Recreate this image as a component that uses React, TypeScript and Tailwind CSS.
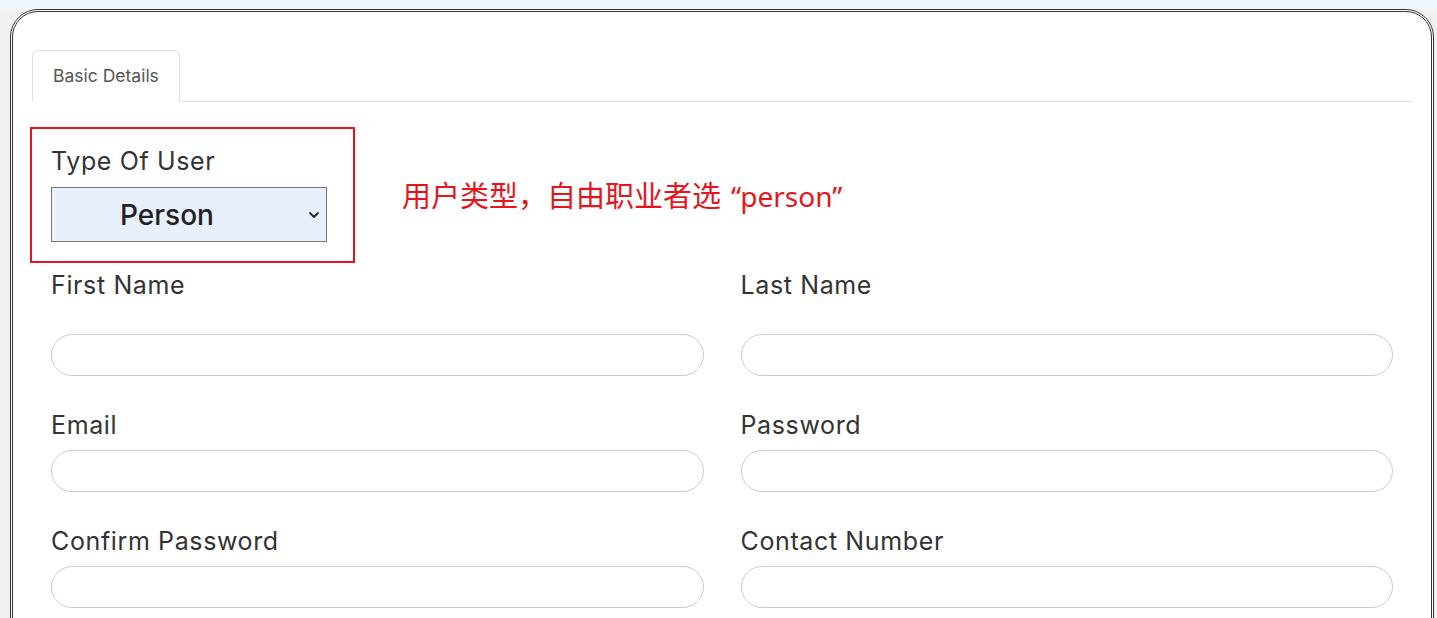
const fields = [
    { label: "First Name", first: true },
    { label: "Last Name", first: true },
    { label: "Email" },
    { label: "Password" },
    { label: "Confirm Password" },
    { label: "Contact Number" },
];

function Field({ label, first }: { label: string; first?: boolean }) {
    return (
        <div className="flex flex-col">
            <label
                className={
                    "text-[25px] leading-[33px] tracking-[0.025em] text-[#333] " +
                    (first ? "mb-6" : "")
                }
            >
                {label}
            </label>
            <input
                type="text"
                className="mt-2 h-[42px] w-full rounded-full border border-[#ccc] bg-white px-4 outline-none"
            />
        </div>
    );
}

export default function App() {
    return (
        <div
            className="min-h-[618px] overflow-hidden bg-[#f1f1f1]"
            style={{ fontFamily: "Inter, 'Noto Sans', sans-serif" }}
        >
            <div className="h-[9px] bg-[#eef5fc]" />
            <div className="pl-[10px] pr-[3px]">
                <div className="h-[700px] rounded-[28px] border-[3px] border-double border-[#333] bg-white px-[19px] pt-[38px]">
                    {/* tabs */}
                    <div className="flex border-b border-[#dee2e6]">
                        <div className="-mb-px flex h-[52px] items-center rounded-t-[5px] border border-[#dee2e6] border-b-white bg-white px-5 text-[17.5px] text-[#555]">
                            Basic Details
                        </div>
                    </div>

                    {/* type of user */}
                    <div className="mt-[25px] flex items-center">
                        <div className="-ml-[2px] w-[325px] border-2 border-[#e8141c] pt-[16px] pb-[19px] pl-[19px]">
                            <div className="text-[25px] leading-[33px] tracking-[0.025em] text-[#333]">
                                Type Of User
                            </div>
                            <div className="relative mt-[9px] w-[276px]">
                                <select
                                    defaultValue="person"
                                    className="h-[55px] w-full appearance-none border border-[#767676] bg-[#e8f0fe] pl-[68px] text-[28px] font-medium text-[#222] outline-none"
                                >
                                    <option value="person">Person</option>
                                    <option value="company">Company</option>
                                </select>
                                <svg
                                    className="pointer-events-none absolute right-[7px] top-[24px]"
                                    width="12"
                                    height="8"
                                    viewBox="0 0 12 8"
                                    fill="none"
                                >
                                    <path
                                        d="M2 2l4 4 4-4"
                                        stroke="#222"
                                        strokeWidth="1.8"
                                        strokeLinecap="round"
                                        strokeLinejoin="round"
                                    />
                                </svg>
                            </div>
                        </div>
                        <div className="ml-[47px] flex items-baseline leading-none text-[#e8141c]">
                            <span
                                className="text-[29px]"
                                style={{
                                    fontFamily:
                                        "'Noto Sans CJK SC', 'Noto Sans', sans-serif",
                                }}
                            >
                                用户类型，自由职业者选
                            </span>
                            <span
                                className="ml-[10px] text-[28px]"
                                style={{ fontFamily: "'Noto Sans', sans-serif" }}
                            >
                                “person”
                            </span>
                        </div>
                    </div>

                    {/* fields */}
                    <div className="mt-[6px] grid grid-cols-2 gap-x-[37px] gap-y-[33px] px-[19px]">
                        {fields.map((f) => (
                            <Field key={f.label} label={f.label} first={f.first} />
                        ))}
                    </div>
                </div>
            </div>
        </div>
    );
}
